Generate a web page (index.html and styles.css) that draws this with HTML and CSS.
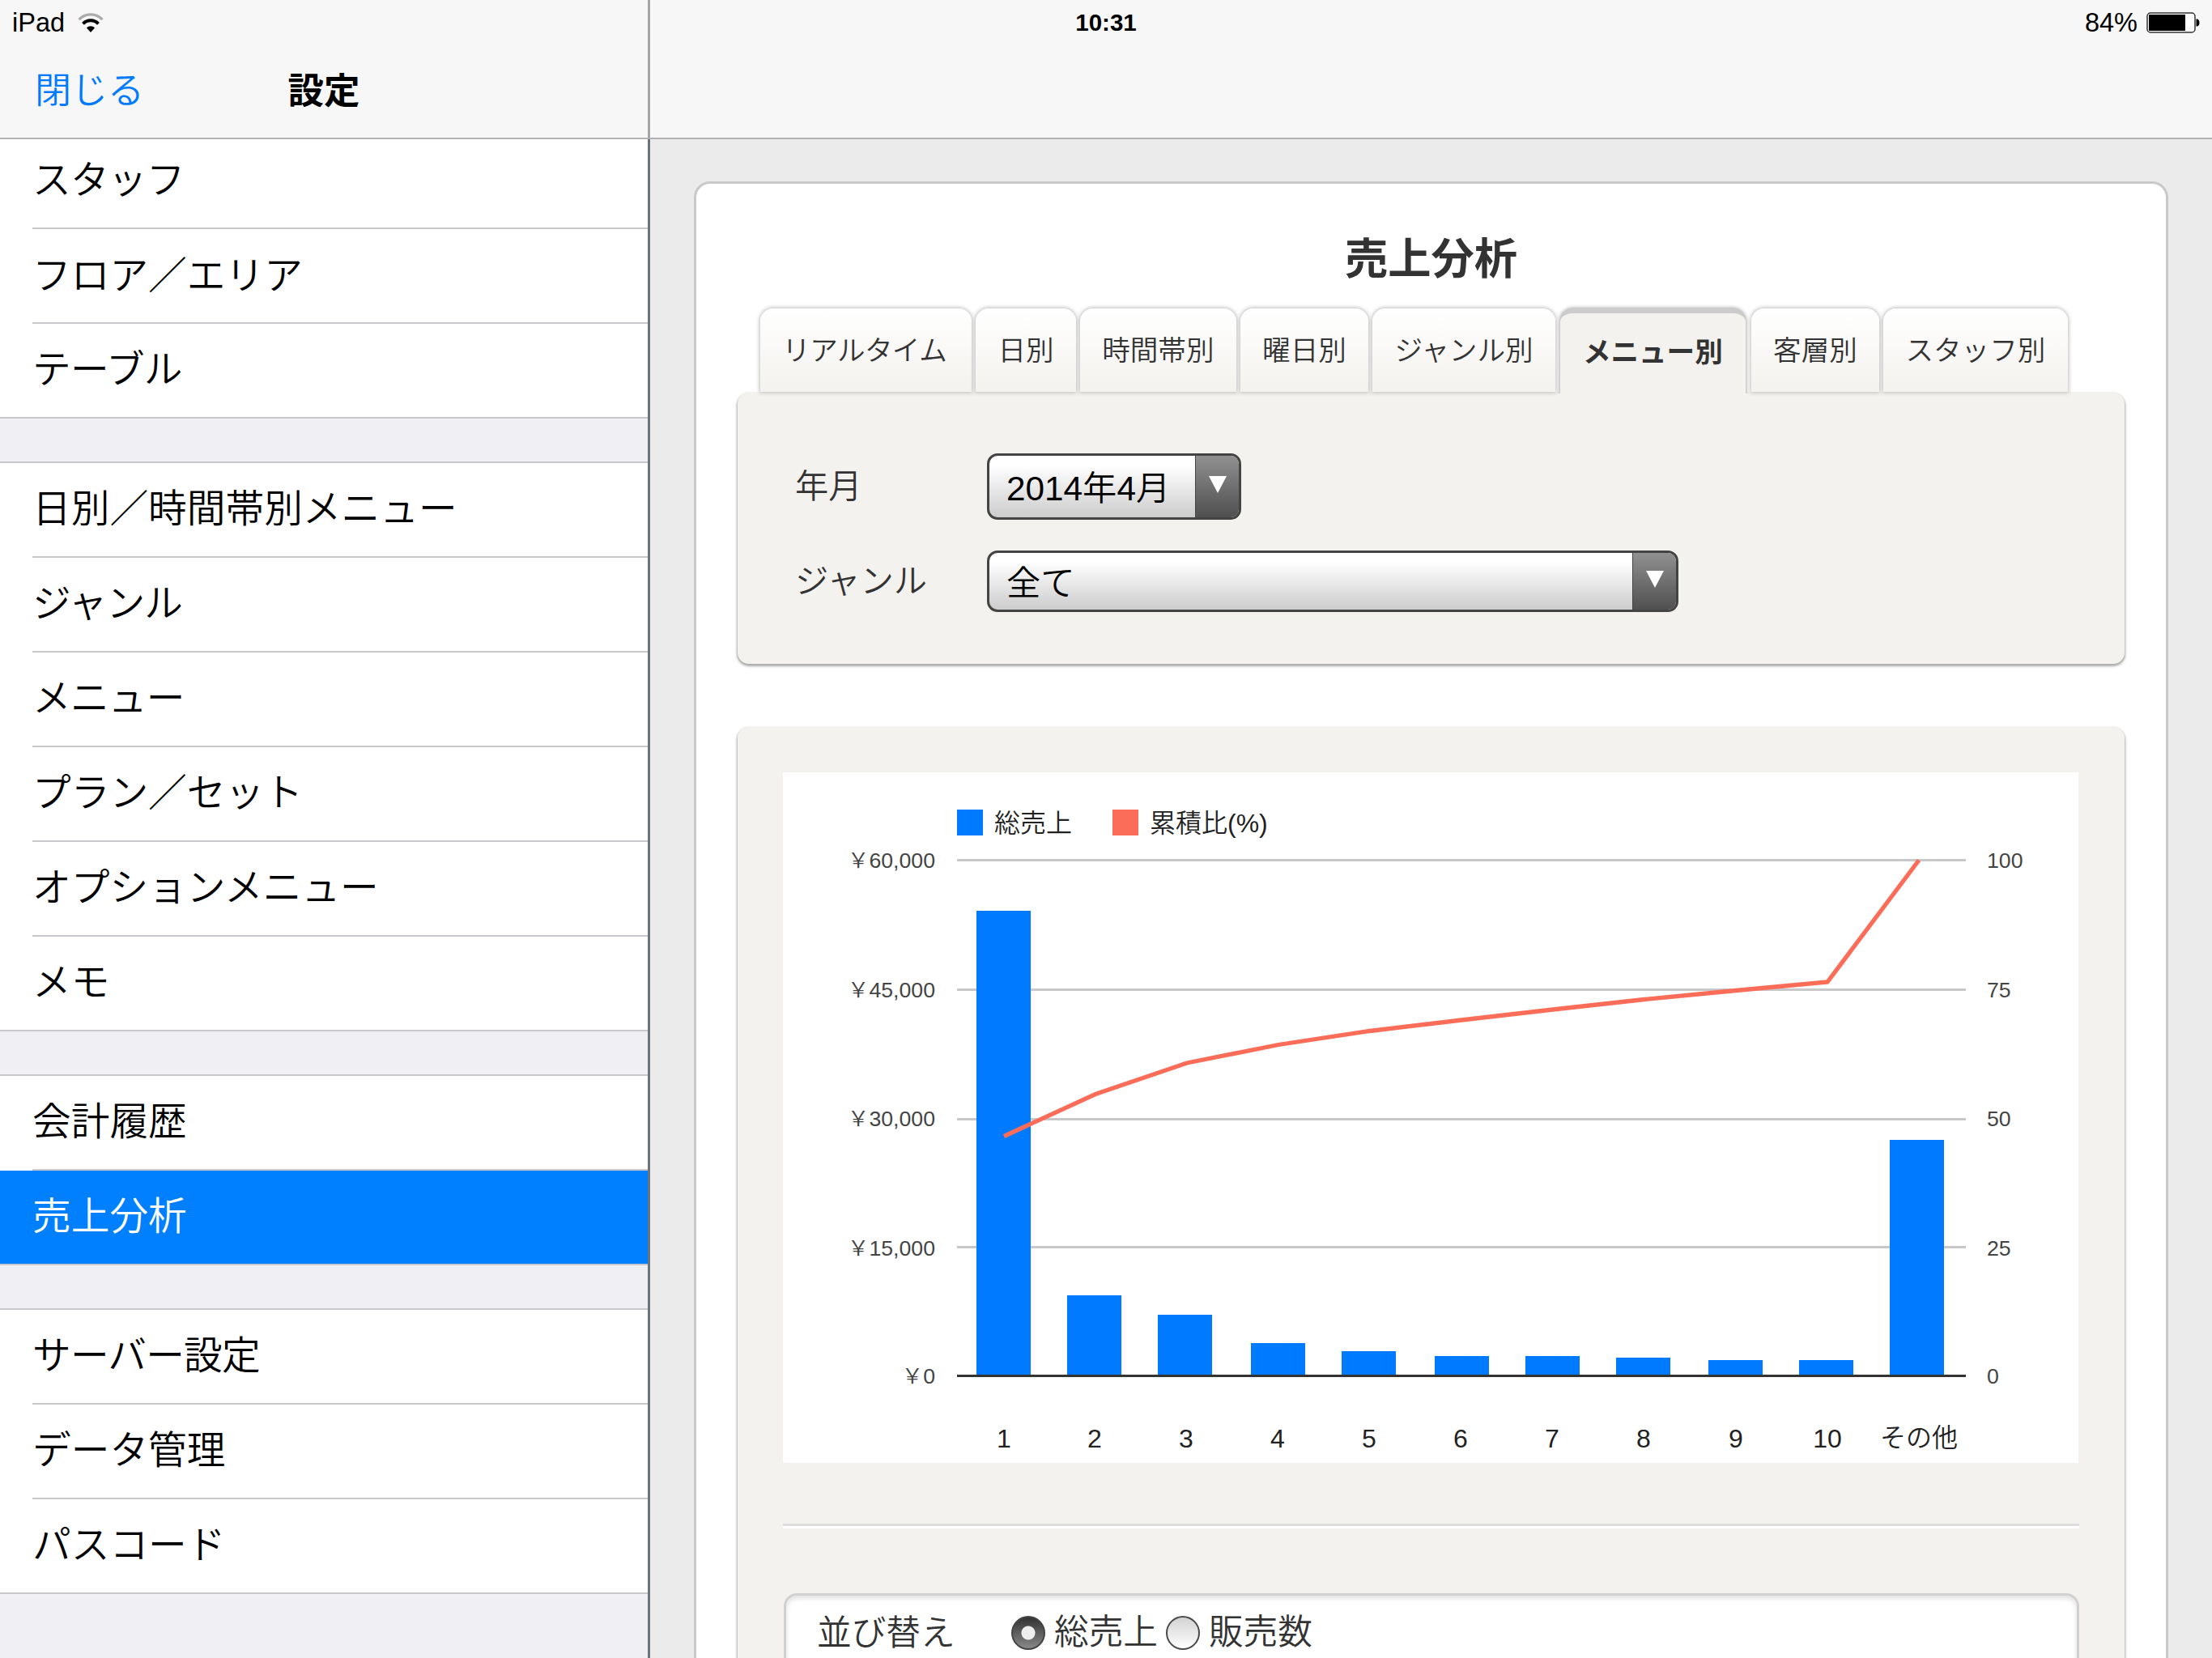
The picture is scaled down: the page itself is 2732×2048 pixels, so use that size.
FILE: index.html
```html
<!DOCTYPE html>
<html lang="ja">
<head>
<meta charset="utf-8">
<title>設定 - 売上分析</title>
<link rel="stylesheet" href="styles.css">
</head>
<body>
<div class="status">
  <div class="status-left"><span>iPad</span>
    <svg class="wifi" viewBox="0 0 32 24"><path d="M1.5 8.2C9.5-.2 22.500-.2 30.500 8.200" fill="none" stroke="#aaa" stroke-width="3.400"/><path d="M6.500 13.400C11.800 8 20.200 8 25.500 13.400" fill="none" stroke="#000" stroke-width="4"/><path d="M16 24l-5-5.500c2.600-3 7.400-3 10 0z" fill="#000"/></svg>
  </div>
  <div class="status-time">10:31</div>
  <div class="status-right"><span>84%</span>
    <svg class="battery" viewBox="0 0 66 26"><rect x="1" y="1" width="59" height="24" rx="4" fill="#fff" stroke="#333" stroke-width="1.500"/><rect x="3" y="3" width="45" height="20" fill="#000"/><path d="M61.500 8.500h1.500q2.500 1 2.500 4.500t-2.500 4.500h-1.500z" fill="#000"/></svg>
  </div>
</div>
<div class="app">
  <aside class="sidebar">
    <header class="nav">
      <a class="close">閉じる</a>
      <h1>設定</h1>
    </header>
    <nav class="menu">
      <ul class="first">
        <li class="tight">スタッフ</li>
        <li>フロア／エリア</li>
        <li class="tight">テーブル</li>
      </ul>
      <ul>
        <li>日別／時間帯別メニュー</li>
        <li class="tight">ジャンル</li>
        <li class="tight">メニュー</li>
        <li>プラン／セット</li>
        <li>オプションメニュー</li>
        <li>メモ</li>
      </ul>
      <ul>
        <li>会計履歴</li>
        <li class="selected">売上分析</li>
      </ul>
      <ul>
        <li class="tight">サーバー設定</li>
        <li>データ管理</li>
        <li>パスコード</li>
      </ul>
    </nav>
  </aside>
  <main class="main">
    <header class="nav"></header>
    <div class="content">
      <section class="card">
        <h2>売上分析</h2>
        <div class="tabs">
          <span class="tab realtime">リアルタイム</span>
          <span class="tab">日別</span>
          <span class="tab">時間帯別</span>
          <span class="tab">曜日別</span>
          <span class="tab">ジャンル別</span>
          <span class="tab active">メニュー別</span>
          <span class="tab">客層別</span>
          <span class="tab">スタッフ別</span>
        </div>
        <div class="panel filters">
          <div class="field">
            <label>年月</label>
            <div class="select month"><span class="value">2014年4月</span><span class="arrow"><svg viewBox="0 0 22 21"><path d="M0 0h22L11 21z"/></svg></span></div>
          </div>
          <div class="field">
            <label>ジャンル</label>
            <div class="select genre"><span class="value">全て</span><span class="arrow"><svg viewBox="0 0 22 21"><path d="M0 0h22L11 21z"/></svg></span></div>
          </div>
        </div>
        <div class="panel report">
          <svg class="chart" viewBox="967 954 1600 853">
            <rect class="sales" x="1182" y="1000" width="32" height="32"/>
            <text class="legend" x="1228" y="1028">総売上</text>
            <rect class="ratio" x="1374" y="1000" width="32" height="32"/>
            <text class="legend" x="1420" y="1028">累積比(%)</text>
            <path class="grid" d="M1182 1062.500H2428M1182 1222.500H2428M1182 1382.500H2428M1182 1540.500H2428"/>
            <g class="sales">
              <rect x="1206" y="1125" width="67" height="574"/>
              <rect x="1318" y="1600" width="67" height="99"/>
              <rect x="1430" y="1624" width="67" height="75"/>
              <rect x="1545" y="1659" width="67" height="40"/>
              <rect x="1657" y="1669" width="67" height="30"/>
              <rect x="1772" y="1675" width="67" height="24"/>
              <rect x="1884" y="1675" width="67" height="24"/>
              <rect x="1996" y="1677" width="67" height="22"/>
              <rect x="2110" y="1680" width="67" height="19"/>
              <rect x="2222" y="1680" width="67" height="19"/>
              <rect x="2334" y="1408" width="67" height="291"/>
            </g>
            <path class="axis" d="M1182 1699.500H2428"/>
            <polyline class="line" points="1240,1403.500 1353,1351.500 1466,1313 1579,1290.500 1692,1273.500 1805,1260 1918,1247 2031,1234.500 2144,1223.500 2257,1213 2370,1062.500"/>
            <g class="ylabel left">
              <text x="1155" y="1072">￥60,000</text>
              <text x="1155" y="1232">￥45,000</text>
              <text x="1155" y="1391">￥30,000</text>
              <text x="1155" y="1551">￥15,000</text>
              <text x="1155" y="1709">￥0</text>
            </g>
            <g class="ylabel">
              <text x="2454" y="1072">100</text>
              <text x="2454" y="1232">75</text>
              <text x="2454" y="1391">50</text>
              <text x="2454" y="1551">25</text>
              <text x="2454" y="1709">0</text>
            </g>
            <g class="xlabel">
              <text x="1240" y="1788">1</text>
              <text x="1352" y="1788">2</text>
              <text x="1465" y="1788">3</text>
              <text x="1578" y="1788">4</text>
              <text x="1691" y="1788">5</text>
              <text x="1804" y="1788">6</text>
              <text x="1917" y="1788">7</text>
              <text x="2030" y="1788">8</text>
              <text x="2144" y="1788">9</text>
              <text x="2257" y="1788">10</text>
              <text x="2370" y="1787">その他</text>
            </g>
          </svg>
          <hr>
          <div class="sort">
            <span class="sort-label">並び替え</span>
            <span class="radio on"></span><span class="radio-text">総売上</span>
            <span class="radio"></span><span class="radio-text">販売数</span>
          </div>
        </div>
      </section>
    </div>
  </main>
</div>
</body>
</html>
```
FILE: styles.css
```css
* { box-sizing: border-box; }

html, body { margin: 0; height: 2048px; overflow: hidden; }

body {
  width: 2732px;
  font-family: "Liberation Sans", "Noto Sans CJK JP DemiLight", "Noto Sans CJK JP", sans-serif;
  font-weight: 350;
  color: #000;
}

h1, h2, .tab.active { font-family: "Liberation Sans", "Noto Sans CJK JP", sans-serif; }

/* status bar floats over both panes */
.status {
  position: absolute;
  inset: 0 0 auto 0;
  height: 56px;
  padding: 0 15px;
  display: grid;
  grid-template-columns: 1fr auto 1fr;
  align-items: center;
  font-size: 32.500px;
  line-height: 56px;
  z-index: 2;
}
.status-left, .status-right { display: flex; align-items: center; }
.status-left { gap: 16px; }
.status-right { justify-content: flex-end; gap: 11px; }
.status-time { font-weight: 700; font-size: 29.500px; }
.wifi { width: 32px; height: 24px; }
.battery { width: 66px; height: 26px; }

.app { display: flex; height: 2048px; overflow: hidden; }

.sidebar {
  width: 803px;
  flex: none;
  background: #efeff4;
  border-right: 3px solid #6b7278;
}
.nav {
  height: 172px;
  background: #f7f7f7;
  border-bottom: 2px solid #b2b2b2;
}
.sidebar .nav {
  display: grid;
  grid-template-columns: 1fr auto 1fr;
  align-items: center;
  padding: 50px 0 4px 43px;
  margin-right: -3px;
  border-right: 3px solid #a3a5a7;
}
.sidebar .nav::after { content: ""; }
.close { color: #007aff; font-size: 45px; }
.nav h1 { margin: 0 43px 0 0; font-size: 44.500px; font-weight: 700; }

.menu { display: flex; flex-direction: column; gap: 53px; }
.menu ul {
  margin: 0;
  padding: 0;
  list-style: none;
  background: #fff;
  border-bottom: 2px solid #c8c7cc;
  border-top: 2px solid #c8c7cc;
}
.menu .first { border-top: 0; }
.menu li {
  height: 117px;
  padding: 0 0 3px 40px;
  display: flex;
  align-items: center;
  font-size: 47.700px;
  line-height: 60px;
  background: linear-gradient(#c8c7cc, #c8c7cc) 40px 100% / 100% 2px no-repeat;
}
.menu .tight { letter-spacing: -.8px; }
.menu .first li { padding-bottom: 1px; }
.menu .first li:first-child { height: 111px; padding-bottom: 10px; }
.menu li:last-child { height: 115px; background: none; padding-bottom: 1px; }
.menu li:last-child.selected { background: #007fff; color: #fff; }

.main { flex: 1; min-width: 0; background: #ebebeb; }
.content { padding: 52px 54px 0 54px; }
.card {
  height: 1900px;
  background: #fff;
  border: 3px solid #c9c9c9;
  border-radius: 20px;
  padding: 0 51px;
}
.card h2 {
  margin: 0;
  padding-top: 59px;
  height: 154px;
  text-align: center;
  font-size: 53.300px;
  line-height: 70px;
  color: #333;
}

.tabs { display: flex; gap: 5px; height: 103px; padding-left: 28px; }
.tab {
  padding: 0 27.300px;
  font-size: 34.600px;
  line-height: 104px;
  color: #333;
  background: linear-gradient(#fff, #f4f2ee);
  border-radius: 16px 16px 0 0;
  box-shadow: 0 0 5px 1px #bbb;
}
.realtime { letter-spacing: -.6px; padding-right: 31px; }
.tab.active {
  margin: 0 2px 0 1px;
  padding: 0 28px;
  font-weight: 700;
  background: #f4f2ee;
  border-top: 6px solid #ccc;
  box-shadow: 0 0 4px 1px #aaa;
  height: 105px;
  line-height: 97px;
  clip-path: inset(-6px -6px 0 -6px);
  position: relative;
}

.panel {
  background: #f4f2ee;
  border-radius: 14px;
  box-shadow: 0 2px 3px 1px #aaa;
}
.filters { height: 335px; margin-top: 1px; padding: 75px 71px 0; }
.field { display: flex; align-items: center; height: 82px; }
.field + .field { height: 76px; margin-top: 38px; }
.field label {
  width: 237px;
  font-size: 41.300px;
  line-height: 60px;
  color: #333;
  padding-bottom: 1px;
}
.select {
  display: flex;
  height: 82px;
  font-size: 42.300px;
  border: 3px solid #444;
  border-radius: 13px;
  background: linear-gradient(#fff, #fff 15%, #ccc);
  overflow: hidden;
}
.month { width: 314px; }
.genre { width: 854px; height: 76px; }
.value { flex: 1; padding-left: 21px; line-height: 82px; white-space: nowrap; }
.genre .value { line-height: 75px; }
.arrow {
  width: 54px;
  display: flex;
  align-items: center;
  justify-content: center;
  padding-bottom: 6px;
  background: linear-gradient(#909090, #505050);
  border-left: 1px solid #444;
}
.arrow svg { width: 22px; height: 21px; fill: #fff; }

.report { height: 1300px; margin-top: 78px; padding: 56px; }
.chart { display: block; width: 1600px; height: 853px; background: #fff; }
.sales { fill: #007aff; }
.ratio { fill: #fb6d59; }
.legend { font-size: 32px; fill: #222; }
.grid { stroke: #c8c8c8; stroke-width: 3px; }
.axis { stroke: #333; stroke-width: 3px; }
.line { fill: none; stroke: #fb6d59; stroke-width: 5.300px; }
.ylabel { font-size: 26.670px; fill: #444; }
.ylabel.left { text-anchor: end; }
.xlabel { font-size: 32px; fill: #222; text-anchor: middle; }

hr {
  margin: 75px 0 0;
  border: 0;
  border-top: 3px solid #dcdcdc;
  border-bottom: 3px solid #fff;
}
.sort {
  display: flex;
  align-items: center;
  margin: 80px 0 0 1px;
  height: 200px;
  padding: 0 0 103px 38px;
  background: #fff;
  border: 3px solid #d0d0d0;
  border-radius: 16px;
  box-shadow: inset 0 3px 6px #ddd;
  font-size: 42.670px;
  line-height: 60px;
  color: #333;
}
.sort-label { width: 240px; }
.radio {
  width: 42px;
  height: 42px;
  border: 2px solid #4a4a4a;
  border-radius: 50%;
  background: linear-gradient(#d2d2d2, #fff);
}
.radio.on { border-color: #444; background: radial-gradient(circle, #eee 0 8px, transparent 9px), linear-gradient(#333, #888); }
.radio-text { margin: 0 10px 1px 11px; }
```
